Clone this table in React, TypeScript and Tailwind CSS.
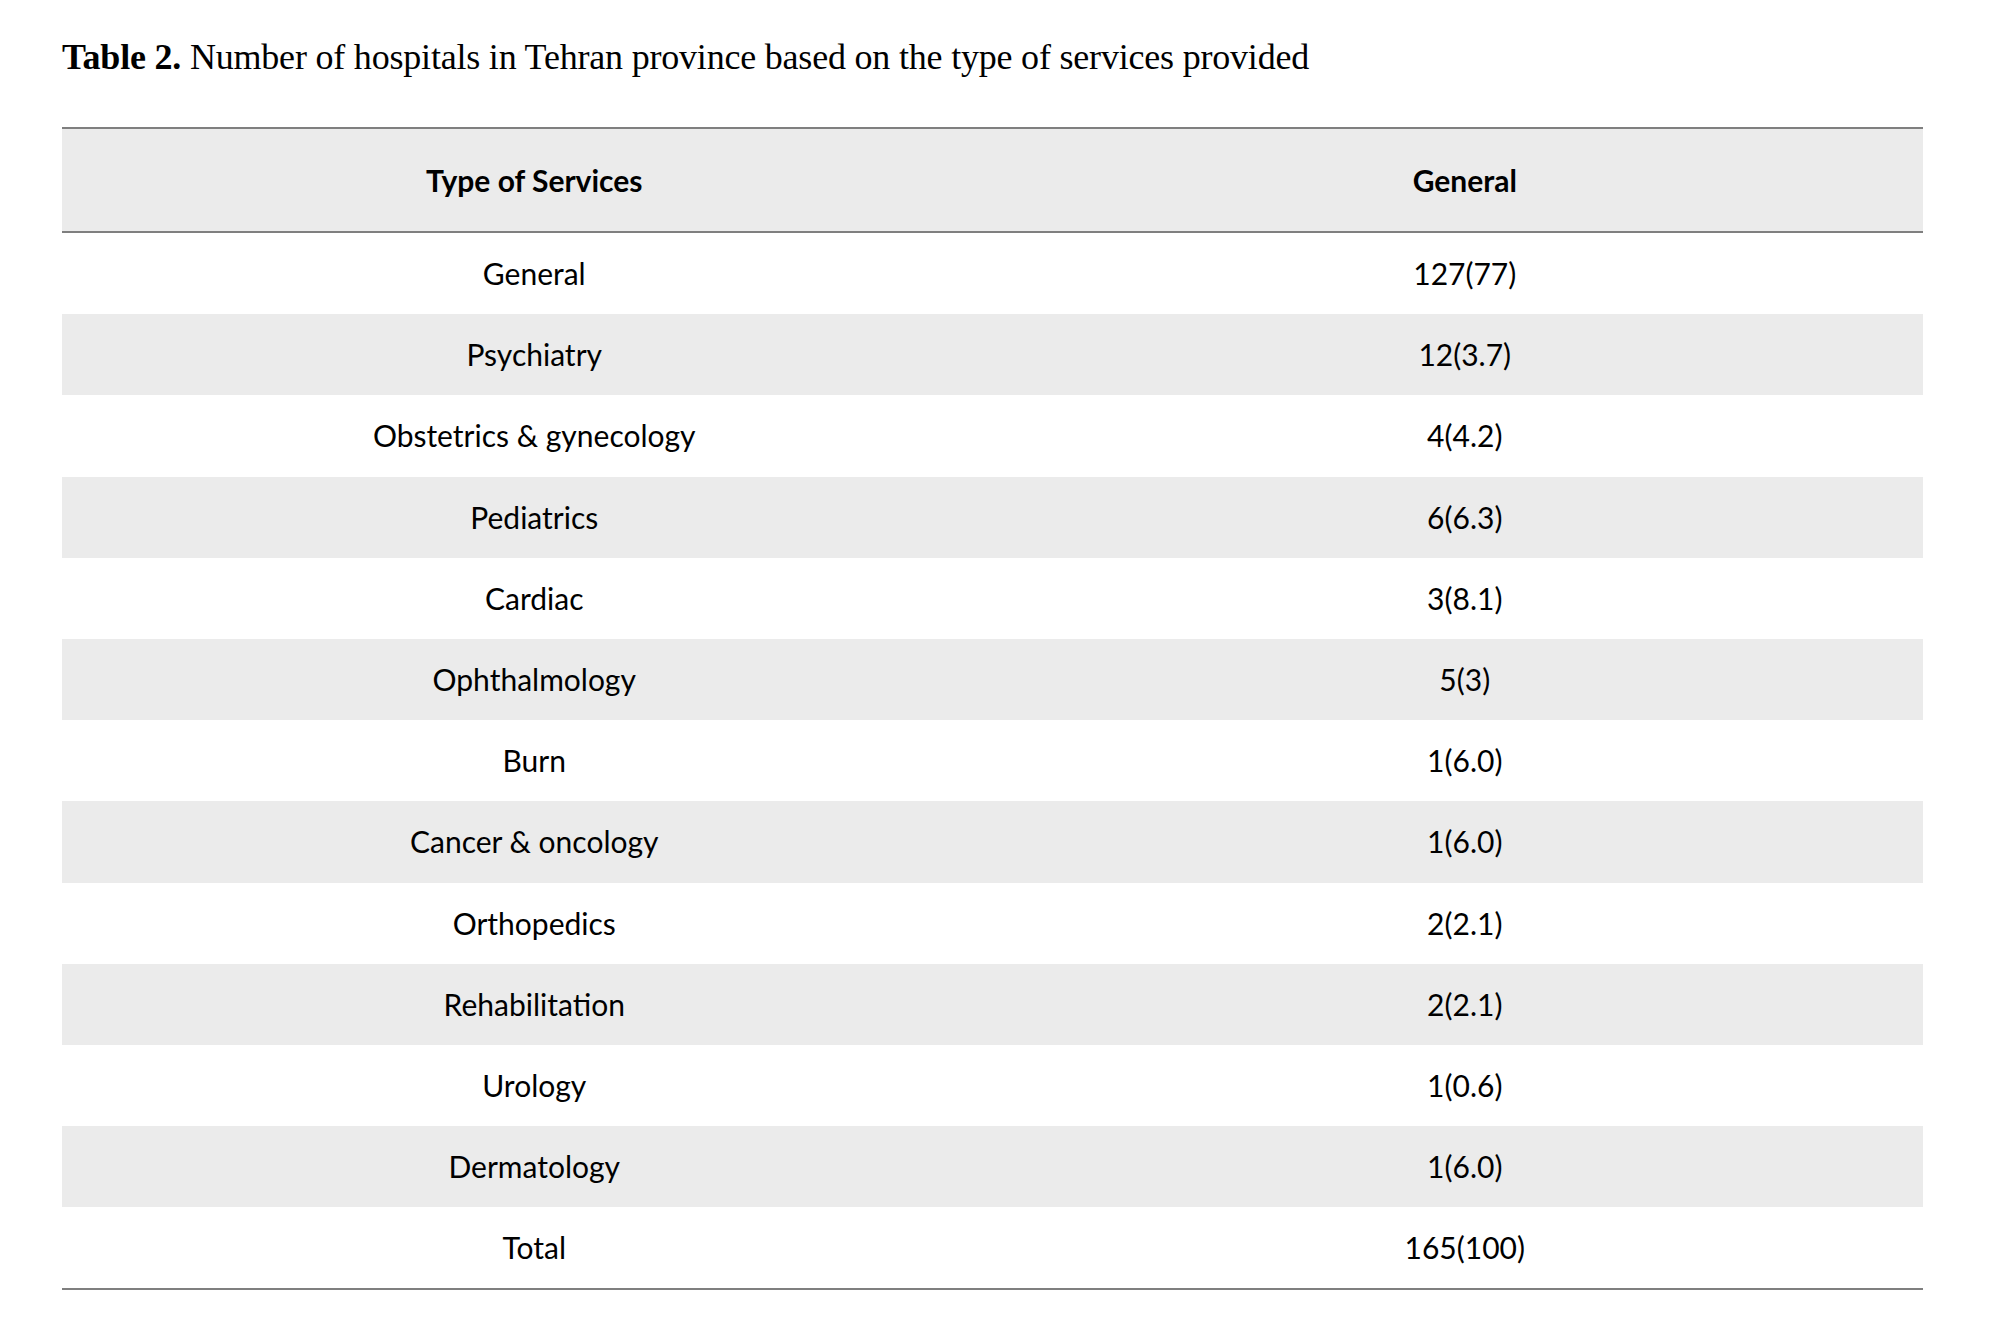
const rows: [string, string][] = [
  ['General', '127(77)'],
  ['Psychiatry', '12(3.7)'],
  ['Obstetrics & gynecology', '4(4.2)'],
  ['Pediatrics', '6(6.3)'],
  ['Cardiac', '3(8.1)'],
  ['Ophthalmology', '5(3)'],
  ['Burn', '1(6.0)'],
  ['Cancer & oncology', '1(6.0)'],
  ['Orthopedics', '2(2.1)'],
  ['Rehabilitation', '2(2.1)'],
  ['Urology', '1(0.6)'],
  ['Dermatology', '1(6.0)'],
  ['Total', '165(100)'],
];

export default function App() {
  return (
    <div className="min-h-screen bg-white pl-[62px] pr-[77px] pt-[39px] text-black">
      <h1 className="font-['Liberation_Serif',serif] text-[36px] leading-[36px] tracking-[-0.2px]">
        <span className="font-bold">Table 2.</span> Number of hospitals in Tehran province based on the type of services provided
      </h1>

      <div className="mt-[52px] font-['Lato',sans-serif] text-[30px]">
        <div className="grid h-[106px] grid-cols-2 border-y-2 border-[#7f7f7f] bg-[#ebebeb] font-bold">
          <div className="flex items-center justify-center pl-[14px]">Type of Services</div>
          <div className="flex items-center justify-center pl-[14px]">General</div>
        </div>
        <div className="border-b-2 border-[#7f7f7f]">
          {rows.map(([service, count], i) => (
            <div
              key={service}
              className={`grid h-[81.2px] grid-cols-2 ${i % 2 === 1 ? 'bg-[#ebebeb]' : 'bg-white'}`}
            >
              <div className="flex items-center justify-center pl-[14px]">{service}</div>
              <div className="flex items-center justify-center pl-[14px]">{count}</div>
            </div>
          ))}
        </div>
      </div>
    </div>
  );
}
